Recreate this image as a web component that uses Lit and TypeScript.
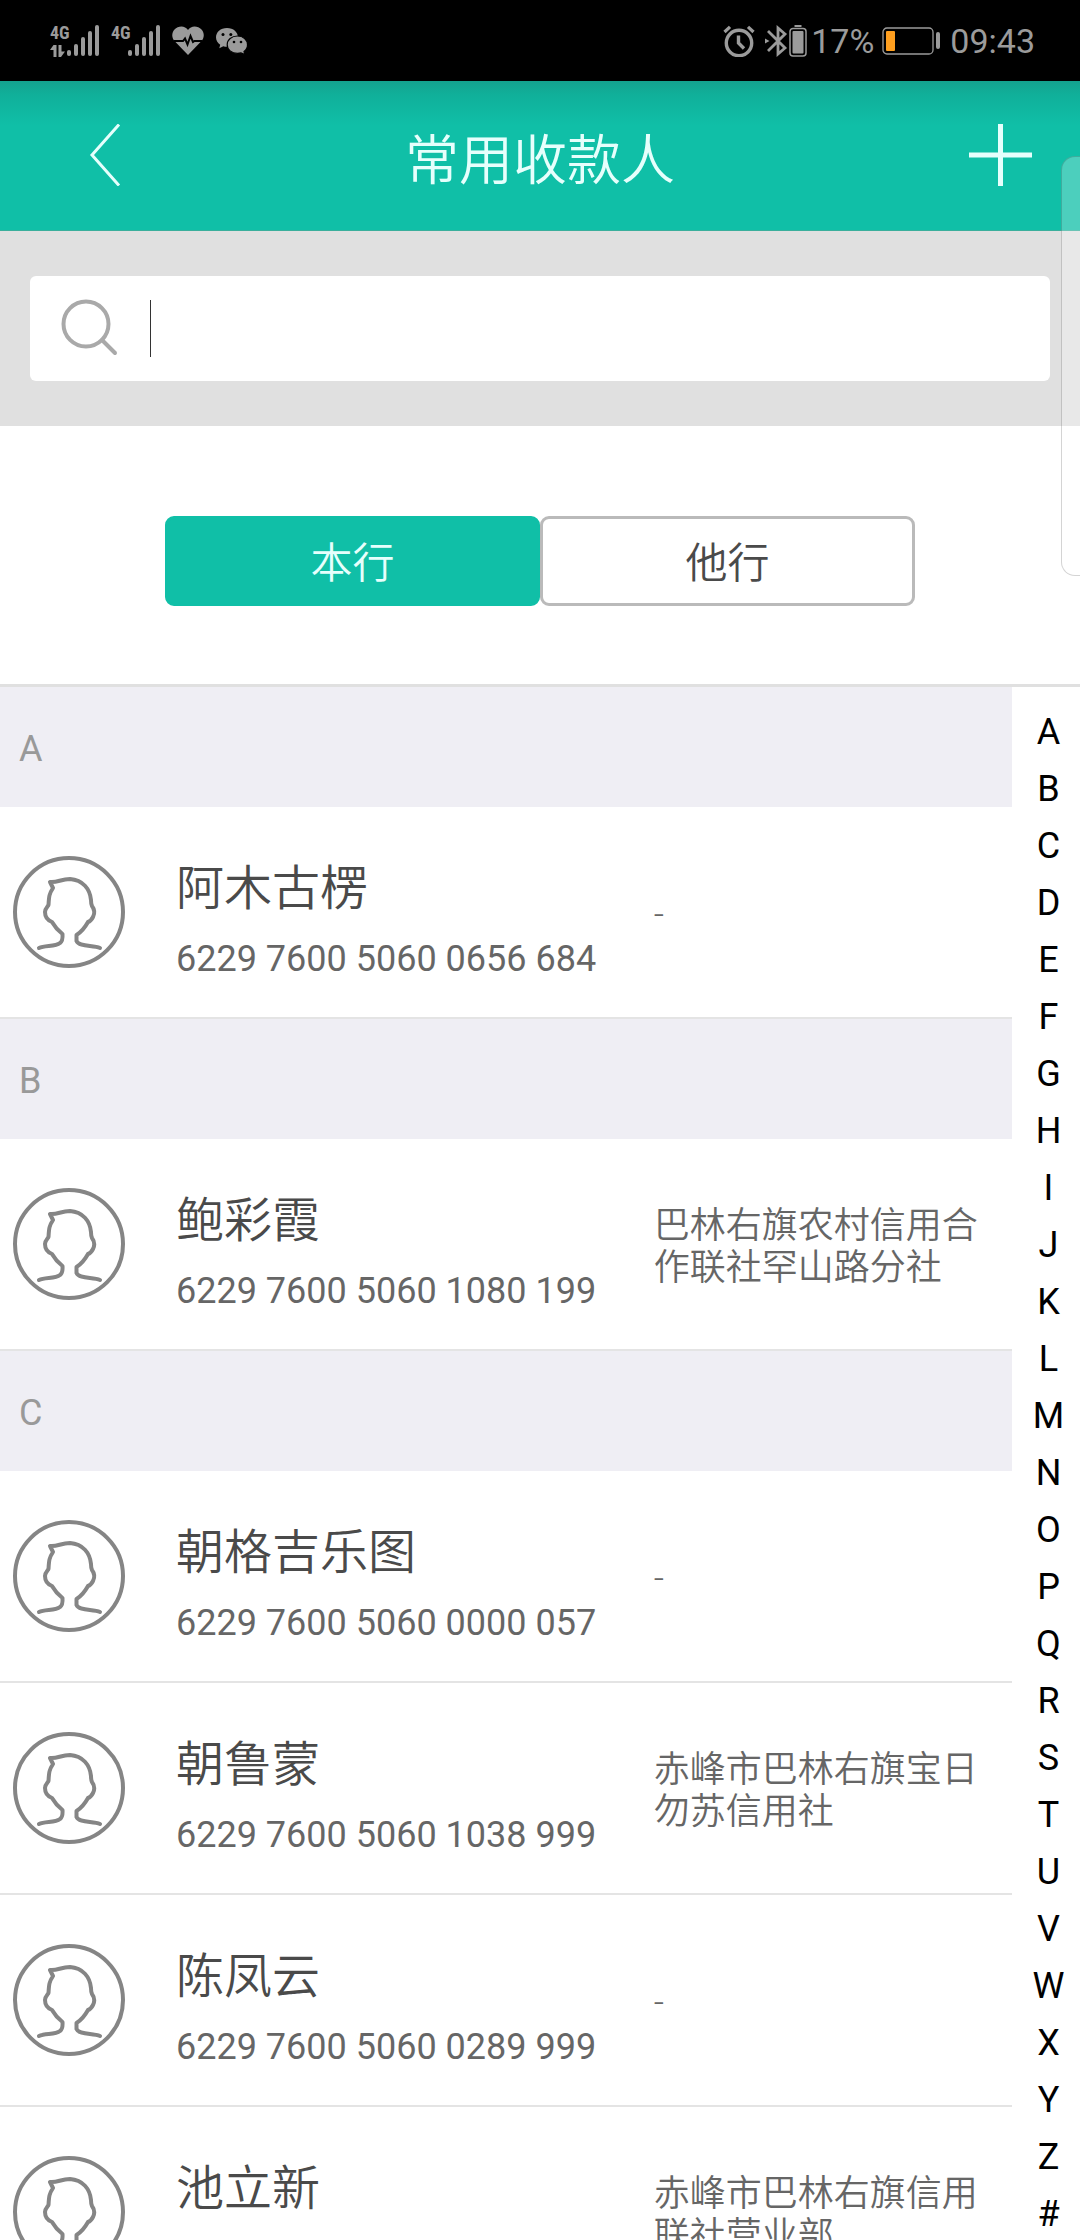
import { LitElement, html, css, svg, nothing } from "lit";
import { customElement, property, state } from "lit/decorators.js";
import { classMap } from "lit/directives/class-map.js";

interface Payee {
  name: string;
  account: string;
  branch: string;
}

interface Group {
  letter: string;
  payees: Payee[];
}

const GROUPS: Group[] = [
  {
    letter: "A",
    payees: [{ name: "阿木古楞", account: "6229 7600 5060 0656 684", branch: "-" }],
  },
  {
    letter: "B",
    payees: [{ name: "鲍彩霞", account: "6229 7600 5060 1080 199", branch: "巴林右旗农村信用合作联社罕山路分社" }],
  },
  {
    letter: "C",
    payees: [
      { name: "朝格吉乐图", account: "6229 7600 5060 0000 057", branch: "-" },
      { name: "朝鲁蒙", account: "6229 7600 5060 1038 999", branch: "赤峰市巴林右旗宝日勿苏信用社" },
      { name: "陈凤云", account: "6229 7600 5060 0289 999", branch: "-" },
      { name: "池立新", account: "", branch: "赤峰市巴林右旗信用联社营业部" },
    ],
  },
];

const INDEX = [..."ABCDEFGHIJKLMNOPQRSTUVWXYZ#"];
const TABS = ["本行", "他行"];

@customElement("status-bar")
export class StatusBar extends LitElement {
  static styles = css`
    :host {
      display: flex;
      justify-content: space-between;
      align-items: center;
      flex: none;
      height: 81px;
      box-sizing: border-box;
      padding: 0 45px 0 50px;
      background: #000;
      color: #9b9b9b;
      font-size: 34px;
      line-height: 40px;
    }
    svg {
      display: block;
      flex: none;
    }
    .group {
      display: flex;
      align-items: center;
      gap: 12px;
    }
    .signal {
      display: flex;
      align-items: flex-end;
      height: 32px;
    }
    .network {
      display: flex;
      flex-direction: column;
      gap: 4px;
      width: 17px;
      height: 32px;
      white-space: nowrap;
      font: bold 18px/16px "Liberation Sans Narrow", "Roboto Condensed", Roboto, sans-serif;
    }
    .power {
      display: flex;
      align-items: center;
      gap: 8px;
    }
    .alarm {
      margin-right: 2px;
    }
    .bluetooth {
      margin-right: -8px;
    }
    .cell {
      margin-right: -4px;
    }
  `;

  private signal(active: boolean) {
    return html`<div class="signal">
      <div class="network">
        <span>4G</span>
        ${active
          ? html`<svg width="15" height="12" viewBox="0 0 15 12" fill="currentColor" aria-hidden="true">
              <path d="M3.5 0H6.5V12H3.5V5H0ZM8.5 0H11.5V6.5H15L11 12H8.5Z" />
            </svg>`
          : nothing}
      </div>
      <svg width="32" height="32" viewBox="0 0 32 32" fill="currentColor" aria-hidden="true">
        ${[6, 12, 19, 25, 31].map(
          (h, i) => svg`<rect x=${i * 7} y=${31 - h} width="4" height=${h} rx="2" />`
        )}
      </svg>
    </div>`;
  }

  render() {
    return html`
      <div class="group">
        ${this.signal(true)} ${this.signal(false)}
        <svg width="32" height="30" viewBox="0 0 32 30" aria-hidden="true">
          <path d="M16 4C19-1 26-.5 29.500 3.500C32.500 7 32.500 11.500 29.500 15L16 29L2.500 15C-.5 11.500-.5 7 2.500 3.500C6-.5 13-1 16 4Z" fill="currentColor" />
          <path d="M2 15H11L13 12.500L15.500 18.500L18.500 10L21 16L22.500 15H30" fill="none" stroke="#000" stroke-width="2" />
        </svg>
        <svg width="32" height="28" viewBox="0 0 32 28" aria-hidden="true">
          <path d="M11 1C4.500 1 0 5.200 0 10.300C0 13.500 1.600 16 4.200 17.800L3.300 21.300L7.300 19.300Q9 19.800 11 19.800C17.500 19.800 22 15.500 22 10.400C22 5.200 17.500 1 11 1Z" fill="currentColor" />
          <path d="M21.500 9C15.500 9 11.200 12.800 11.200 17.700C11.200 22.600 15.500 26.400 21.500 26.400Q23.300 26.400 25 25.900L28.800 27.500L28 24.500C30.300 22.900 31.500 20.500 31.500 17.700C31.500 12.800 27.200 9 21.500 9Z" fill="currentColor" stroke="#000" stroke-width="1.200" />
          <g fill="#000">
            <circle cx="7" cy="7.500" r="1.500" /><circle cx="14.800" cy="7.500" r="1.500" />
            <circle cx="18" cy="15" r="1.300" /><circle cx="25" cy="15" r="1.300" />
          </g>
        </svg>
      </div>
      <div class="power">
        <svg class="alarm" width="32" height="32" viewBox="0 0 32 32" fill="none" stroke="currentColor" aria-hidden="true">
          <circle cx="16" cy="18" r="12.700" stroke-width="3.400" />
          <path d="M15.500 10.500V18L21 23.500" stroke-width="3.400" />
          <path d="M1.500 7L7 1.800M30.500 7L25 1.800" stroke-width="3.200" />
        </svg>
        <svg class="bluetooth" width="24" height="32" viewBox="0 0 24 32" fill="none" stroke="currentColor" stroke-width="2.800" aria-hidden="true">
          <path d="M3 6L20 23L13 29V3L20 9L3 26" />
          <path d="M0 13.500L4.500 16L0 18.500Z" fill="currentColor" stroke="none" />
        </svg>
        <svg class="cell" width="18" height="32" viewBox="0 0 18 32" aria-hidden="true">
          <rect x="5.500" y="0" width="7" height="2" fill="currentColor" />
          <rect x="1" y="3.500" width="16" height="27.500" rx="3" fill="none" stroke="currentColor" stroke-width="1.500" />
          <rect x="3.500" y="6" width="11" height="22.500" rx="1" fill="currentColor" />
        </svg>
        <span>17%</span>
        <svg width="60" height="28" viewBox="0 0 60 28" aria-hidden="true">
          <rect x="1" y="1" width="50" height="26" rx="4" fill="none" stroke="currentColor" stroke-width="1.300" />
          <rect x="4" y="4" width="9" height="20" rx="1" fill="#ff9f1f" />
          <rect x="54" y="5" width="4" height="17" rx="2" fill="currentColor" />
        </svg>
        <span>09:43</span>
      </div>
    `;
  }
}

@customElement("payee-row")
export class PayeeRow extends LitElement {
  @property({ attribute: false }) payee!: Payee;

  static styles = css`
    :host {
      display: block;
    }
    .row {
      display: grid;
      grid-template-columns: 176px minmax(0, 4fr) minmax(0, 3fr);
      align-items: center;
      height: 212px;
      box-sizing: border-box;
      border-bottom: 2px solid #e4e4e4;
      color: #666;
      font-size: 36px;
      text-decoration: none;
    }
    .avatar {
      display: block;
      padding-left: 13px;
    }
    .who {
      display: flex;
      flex-direction: column;
      padding-top: 24px;
    }
    .name {
      font-size: 48px;
      font-weight: 350;
      line-height: 70px;
      color: #4a4a4a;
    }
    .account {
      line-height: 70px;
      min-height: 70px;
    }
    .branch {
      padding-top: 6px;
      font-weight: 350;
      line-height: 42px;
    }
  `;

  render() {
    const { name, account, branch } = this.payee;
    return html`<a class="row" href="#payee">
      <svg class="avatar" width="112" height="112" viewBox="0 0 112 112" fill="none" stroke="#858585" stroke-width="4" stroke-linecap="round" stroke-linejoin="round" aria-hidden="true">
        <circle cx="56" cy="56" r="54" />
        <path d="M26 92C32 89 42 91 47 87Q50 85 49.500 78Q43 73 39 66C34 64 32 60 32 56C32 53 34 51 35.500 49C36 41 36 38 40 32L37 26C44 27 48 23 57 23C70 24 77 33 78 44Q78 48 79 50C82 54 82 57 80 61Q78 65 75 66Q70 75 63.500 79V85C66 91 80 89 87 92" />
      </svg>
      <span class="who">
        <span class="name">${name}</span>
        <span class="account">${account}</span>
      </span>
      <span class="branch">${branch}</span>
    </a>`;
  }
}

@customElement("app-root")
export class AppRoot extends LitElement {
  @state() private tab = 0;

  static styles = css`
    :host {
      position: relative;
      display: flex;
      flex-direction: column;
      height: 100vh;
      overflow: hidden;
      background: #fff;
      color: #4a4a4a;
      font-family: Roboto, "Noto Sans CJK SC", sans-serif;
    }
    button {
      font: inherit;
      margin: 0;
      cursor: pointer;
    }
    .header {
      display: grid;
      grid-template-columns: 210px 1fr 210px;
      align-items: center;
      flex: none;
      height: 150px;
      box-sizing: border-box;
      border-bottom: 1px solid #3aaf9c;
      background: linear-gradient(#14a28e, #10b09a 14px, #10bfa7 44px);
      color: #e6fffc;
    }
    .title {
      margin: 0;
      padding-top: 12px;
      text-align: center;
      font-size: 54px;
      font-weight: 350;
      line-height: 80px;
    }
    .action {
      display: flex;
      align-items: center;
      justify-content: center;
      align-self: start;
      padding: 0;
      border: 0;
      height: 147px;
      background: none;
      color: inherit;
    }
    .add {
      justify-content: flex-end;
      padding-right: 48px;
    }
    .search {
      flex: none;
      padding: 45px 30px;
      background: #e0e0e0;
    }
    .field {
      display: flex;
      align-items: center;
      height: 105px;
      padding-left: 30px;
      border-radius: 6px;
      background: #fff;
    }
    .caret {
      flex: none;
      width: 1px;
      height: 57px;
      margin-left: 30px;
      background: #333;
    }
    .input {
      flex: 1;
      min-width: 0;
      height: 100%;
      padding: 0 20px 0 0;
      border: 0;
      outline: 0;
      background: none;
      font: inherit;
      font-size: 42px;
      color: inherit;
    }
    .tabs {
      display: flex;
      flex: none;
      padding: 90px 165px 78px;
      border-bottom: 3px solid #e0e0e0;
    }
    .tab {
      flex: 1;
      height: 90px;
      padding: 6px 0 0;
      border: 3px solid #bababa;
      border-radius: 9px;
      background: #fff;
      color: #4a4a4a;
      font-size: 42px;
      font-weight: 350;
      line-height: 78px;
    }
    .selected {
      border-color: #10bfa7;
      background: #10bfa7;
      color: #e6fffc;
    }
    .content {
      display: flex;
      flex: 1;
      min-height: 0;
    }
    .list {
      flex: 1;
      overflow-y: auto;
      scrollbar-width: none;
    }
    .letter {
      margin: 0;
      padding: 4px 0 0 19px;
      background: #efeef4;
      color: #999;
      font-size: 36px;
      font-weight: 400;
      line-height: 116px;
    }
    .payees {
      margin: 0;
      padding: 0;
      list-style: none;
    }
    .index {
      display: flex;
      flex-direction: column;
      flex: none;
      width: 68px;
      padding-top: 17px;
      box-sizing: border-box;
      overflow: hidden;
    }
    .jump {
      flex: none;
      padding-left: 5px;
      color: #000;
      font-size: 36px;
      line-height: 57px;
      text-align: center;
      text-decoration: none;
    }
    .edge {
      position: absolute;
      top: 156px;
      right: 0;
      width: 19px;
      height: 420px;
      box-sizing: border-box;
      border: 1px solid rgba(0, 0, 0, 0.17);
      border-right: 0;
      border-radius: 14px 0 0 14px;
      background: rgba(255, 255, 255, 0.25);
      pointer-events: none;
    }
  `;

  render() {
    return html`
      <status-bar></status-bar>
      <header class="header">
        <button class="action" aria-label="返回">
          <svg width="32" height="62" viewBox="0 0 32 62" fill="none" stroke="currentColor" stroke-width="3" aria-hidden="true">
            <path d="M30 0.500L3 31L30 61.500" />
          </svg>
        </button>
        <h1 class="title">常用收款人</h1>
        <button class="action add" aria-label="添加">
          <svg width="63" height="62" viewBox="0 0 63 62" fill="none" stroke="currentColor" stroke-width="5" aria-hidden="true">
            <path d="M31.500 0V62M0 31H63" />
          </svg>
        </button>
      </header>
      <div class="search">
        <label class="field">
          <svg width="60" height="60" viewBox="0 0 60 60" fill="none" stroke="#a9a9a9" stroke-width="4" stroke-linecap="round" aria-hidden="true">
            <circle cx="26" cy="25" r="22.500" />
            <path d="M42 41L55 54" />
          </svg>
          <span class="caret"></span>
          <input class="input" type="text" aria-label="搜索" />
        </label>
      </div>
      <div class="tabs" role="tablist">
        ${TABS.map(
          (label, i) => html`<button
            class=${classMap({ tab: true, selected: this.tab === i })}
            role="tab"
            aria-selected=${this.tab === i ? "true" : "false"}
            @click=${() => (this.tab = i)}
          >${label}</button>`
        )}
      </div>
      <div class="content">
        <main class="list">
          ${GROUPS.map(
            (group) => html`<section id=${group.letter}>
              <h2 class="letter">${group.letter}</h2>
              <ul class="payees">
                ${group.payees.map((payee) => html`<li><payee-row .payee=${payee}></payee-row></li>`)}
              </ul>
            </section>`
          )}
        </main>
        <nav class="index">
          ${INDEX.map((letter) => html`<a class="jump" href="#${letter}">${letter}</a>`)}
        </nav>
      </div>
      <div class="edge"></div>
    `;
  }
}
